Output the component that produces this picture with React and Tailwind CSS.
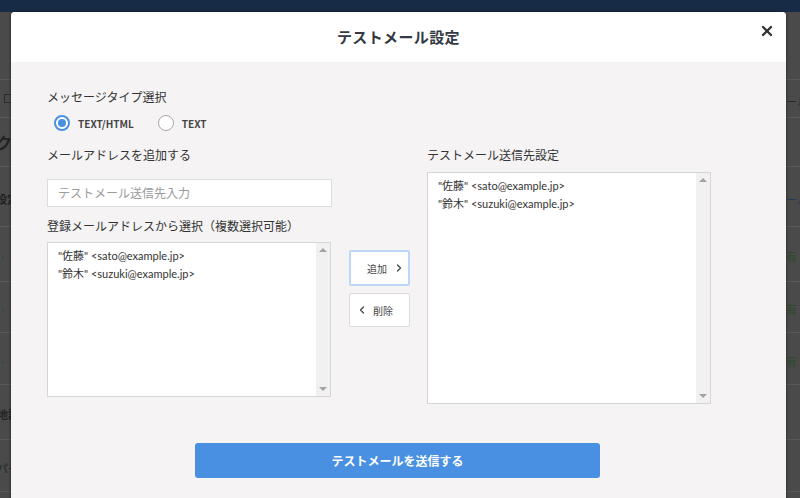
import { ChevronLeft, ChevronRight, X } from "lucide-react";

const font = { fontFamily: '"Noto Sans CJK JP", "Noto Sans", sans-serif' };

function Radio({ checked, label }) {
  return (
    <label className="flex items-center gap-2">
      <span
        className={`flex h-4 w-4 items-center justify-center rounded-full bg-white ${checked ? "border-2 border-[#4a90e2]" : "border border-[#a8a8a8]"}`}
      >
        {checked && <span className="h-2 w-2 rounded-full bg-[#4a90e2]" />}
      </span>
      <span className="text-[10px] font-bold text-[#444]">{label}</span>
    </label>
  );
}

function ListBox({ items, className }) {
  return (
    <div className={`flex border border-[#d6d6d6] bg-white ${className}`}>
      <div className="flex-1 px-[10px] pt-[4px] font-['Lato','Noto_Sans_CJK_JP',sans-serif] text-[11px] leading-[18px] text-[#333]">
        {items.map((item) => (
          <div key={item}>{item}</div>
        ))}
      </div>
      <div className="flex w-[14px] flex-col items-center justify-between bg-[#f1f1f1] py-[5px]">
        <span className="h-0 w-0 border-x-[4px] border-b-[4px] border-x-transparent border-b-[#a3a3a3]" />
        <span className="h-0 w-0 border-x-[4px] border-t-[4px] border-x-transparent border-t-[#a3a3a3]" />
      </div>
    </div>
  );
}

const rows = [
  { h: "h-[68px]" },
  { h: "h-[38px]", left: <span className="ml-[4px] block h-[9px] w-[9px] border border-[#2a2a2a]" />, right: <span className="text-[11px] text-[#2a2a2a]">ール</span> },
  { h: "h-[49px]", left: <span className="-ml-[4px] text-[16px] font-bold text-[#222]">ク</span> },
  { h: "h-[60px]", left: <span className="-ml-[4px] text-[11px] font-bold text-[#222]">設定</span>, right: <span className="text-[11px] text-[#233a5a]">ール</span> },
  { h: "h-[55px]", left: <span className="text-[10px] text-[#233a5a]">·</span>, right: <span className="text-[11px] text-[#2a4a2a]">有 (</span> },
  { h: "h-[51px]", left: <span className="text-[10px] text-[#233a5a]">·</span>, right: <span className="text-[11px] text-[#2a4a2a]">有 (</span> },
  { h: "h-[52px]", left: <span className="text-[10px] text-[#233a5a]">·</span>, right: <span className="text-[11px] text-[#2a4a2a]">有 (</span> },
  { h: "h-[55px]", left: <span className="-ml-[3px] text-[11px] font-bold text-[#222]">地設</span> },
  { h: "h-[52px]", left: <span className="-ml-[3px] text-[11px] text-[#222]">パー</span> },
];

export default function App() {
  const sato = '"佐藤" <sato@example.jp>';
  const suzuki = '"鈴木" <suzuki@example.jp>';
  return (
    <div className="relative h-[498px] w-[800px] overflow-hidden bg-[#4a4a4a]" style={font}>
      {/* dimmed page behind */}
      <div className="h-[12px] bg-[#182b46]" />
      {rows.map((row, i) => (
        <div key={i} className={`flex items-center justify-between overflow-hidden border-b border-[#585858] ${row.h}`}>
          <div className="w-[11px] overflow-hidden whitespace-nowrap">{row.left}</div>
          <div className="w-[14px] overflow-hidden whitespace-nowrap">{row.right}</div>
        </div>
      ))}

      {/* modal */}
      <div className="absolute left-[11px] top-[12px] h-[500px] w-[775px] overflow-hidden rounded-t-[4px] bg-[#f5f3f4] shadow-[0_0_3px_rgba(0,0,0,0.6)]">
        <div className="relative flex h-[50px] items-center justify-center bg-white">
          <h1 className="text-[15px] font-bold tracking-wide text-[#333a44]">テストメール設定</h1>
          <X className="absolute right-[11px] top-[11px] h-[16px] w-[16px] text-[#333]" strokeWidth={3.5} />
        </div>

        <div className="pl-[36px] pt-[26px] text-[12px] text-[#333]">
          <p className="leading-[18px]">メッセージタイプ選択</p>
          <div className="mt-[9px] flex items-center gap-[24px] pl-[7px]">
            <Radio checked label="TEXT/HTML" />
            <Radio label="TEXT" />
          </div>

          <div className="mt-[15px] flex">
            <div className="w-[285px]">
              <p className="leading-[18px]">メールアドレスを追加する</p>
              <div className="mt-[15px] flex h-[28px] items-center border border-[#dcdcdc] bg-white px-[10px] text-[#9a9a9a]">
                テストメール送信先入力
              </div>
              <p className="mt-[10px] leading-[18px]">登録メールアドレスから選択（複数選択可能）</p>
              <ListBox items={[sato, suzuki]} className="mt-[7px] h-[155px] w-[284px]" />
            </div>

            <div className="ml-[17px] flex w-[61px] flex-col gap-[7px] pt-[104px]">
              <button className="flex h-[36px] items-center justify-end gap-[6px] rounded-[2px] border-2 border-[#bdd7f7] bg-white pr-[3px] text-[10px] text-[#444]">
                追加
                <ChevronRight className="h-[12px] w-[12px] text-[#444]" strokeWidth={2.5} />
              </button>
              <button className="flex h-[34px] items-center gap-[5px] rounded-[2px] border border-[#dcdcdc] bg-white pl-[6px] text-[10px] text-[#444]">
                <ChevronLeft className="h-[12px] w-[12px] text-[#444]" strokeWidth={2.5} />
                削除
              </button>
            </div>

            <div className="ml-[17px] w-[284px]">
              <p className="leading-[18px]">テストメール送信先設定</p>
              <ListBox items={[sato, suzuki]} className="mt-[8px] h-[232px] w-[284px]" />
            </div>
          </div>
        </div>

        <div className="mt-[39px] flex justify-center pr-[2px]">
          <button className="h-[35px] w-[405px] rounded-[3px] bg-[#4a90e2] text-[12px] font-bold text-white">
            テストメールを送信する
          </button>
        </div>
      </div>
    </div>
  );
}
